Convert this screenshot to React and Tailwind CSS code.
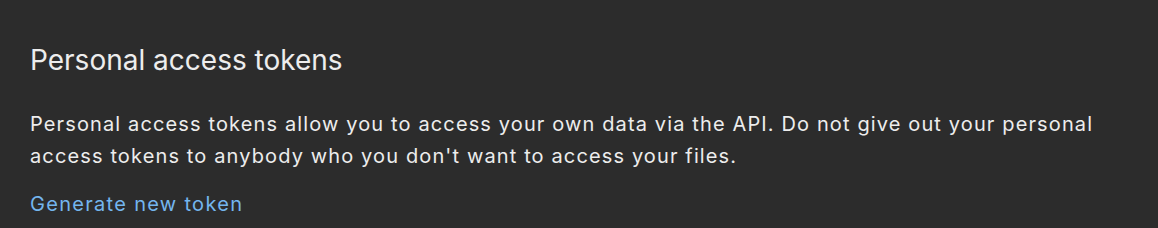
export default function App() {
  return (
    <div className="w-[1158px] h-[228px] bg-[#2c2c2c] text-[#ededed] overflow-hidden font-['Inter',sans-serif]">
      <div className="flex flex-col items-start pl-[30px] pr-[30px] pt-[43px]">
        <h2 className="text-[28px] leading-[34px] font-normal">Personal access tokens</h2>
        <p className="mt-[31px] max-w-[1100px] text-[20px] leading-[32px] tracking-[1.13px]">
          Personal access tokens allow you to access your own data via the API. Do not give out your personal access tokens to anybody who you don't want to access your files.
        </p>
        <a href="#" className="mt-[16px] text-[20px] leading-[32px] tracking-[1.3px] text-[#74b6ee]">Generate new token</a>
      </div>
    </div>
  );
}
